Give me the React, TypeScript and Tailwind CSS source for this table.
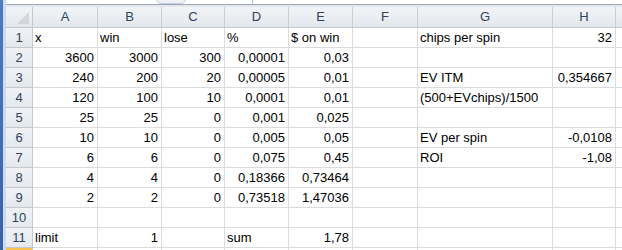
import React from "react";

const cols = [
  { k: "A", w: 65 },
  { k: "B", w: 64 },
  { k: "C", w: 63 },
  { k: "D", w: 64 },
  { k: "E", w: 64 },
  { k: "F", w: 65 },
  { k: "G", w: 135 },
  { k: "H", w: 63 },
];

type Cell = string | [string, "l" | "r"];

const data: string[][] = [
  ["x", "win", "lose", "%", "$ on win", "", "chips per spin", "32"],
  ["3600", "3000", "300", "0,00001", "0,03", "", "", ""],
  ["240", "200", "20", "0,00005", "0,01", "", "EV ITM", "0,354667"],
  ["120", "100", "10", "0,0001", "0,01", "", "(500+EVchips)/1500", ""],
  ["25", "25", "0", "0,001", "0,025", "", "", ""],
  ["10", "10", "0", "0,005", "0,05", "", "EV per spin", "-0,0108"],
  ["6", "6", "0", "0,075", "0,45", "", "ROI", "-1,08"],
  ["4", "4", "0", "0,18366", "0,73464", "", "", ""],
  ["2", "2", "0", "0,73518", "1,47036", "", "", ""],
  ["", "", "", "", "", "", "", ""],
  ["limit", "1", "", "sum", "1,78", "", "", ""],
];

const isNum = (s: string) => /^-?[0-9]+(,[0-9]+)?$/.test(s);

export default function App() {
  return (
    <div
      className="relative w-[622px] h-[250px] overflow-hidden bg-white flex"
      style={{ fontFamily: '"Liberation Sans", Arial, sans-serif' }}
    >
      {/* window frame on the left */}
      <div className="flex shrink-0">
        <div className="w-[3px] h-full bg-gradient-to-b from-[#4f7bbf] to-[#3a63a3]" />
        <div className="w-[3px] h-full bg-[#cfdaea]" />
      </div>
      <div className="flex flex-col flex-1">
        {/* formula bar remnant */}
        <div className="h-[5px] bg-white border-b border-[#9aa6b5] relative shrink-0">
          <div className="absolute left-[246px] top-0 h-full w-px bg-[#b8c0ca]" />
          <div className="absolute left-[150px] top-[-6px] w-[30px] h-[10px] rounded-full border border-[#c8ced6] bg-[#eef1f5]" />
        </div>
        <div className="h-[2px] bg-[#e4e8ee] shrink-0" />
        {/* column header */}
        <div className="flex h-[21px] shrink-0 bg-gradient-to-b from-[#f2f4f7] to-[#e3e7ec] border-b border-[#c3c9d1]">
          <div className="w-[27px] shrink-0 border-r border-[#c3c9d1] relative">
            <div
              className="absolute right-[3px] bottom-[3px] w-0 h-0"
              style={{
                borderLeft: "12px solid transparent",
                borderBottom: "12px solid #d3d7dc",
              }}
            />
          </div>
          {cols.map((c) => (
            <div
              key={c.k}
              style={{ width: c.w }}
              className="shrink-0 border-r border-[#c9ced5] flex items-center justify-center text-[13px] text-[#2e435c]"
            >
              {c.k}
            </div>
          ))}
          <div className="flex-1" />
        </div>
        {data.map((row, ri) => (
          <div key={ri} className="flex h-[20px] shrink-0">
            <div className="w-[27px] shrink-0 bg-gradient-to-b from-[#f0f2f5] to-[#e4e8ed] border-r border-b border-[#c3c9d1] flex items-center justify-center text-[13px] text-[#2e435c]">
              {ri + 1}
            </div>
            {cols.map((c, ci) => {
              const v = row[ci];
              const right = isNum(v);
              return (
                <div
                  key={c.k}
                  style={{ width: c.w }}
                  className={`shrink-0 border-r border-b border-[#dadcdd] flex items-end pb-[1px] text-[13px] leading-[16px] text-black whitespace-nowrap ${
                    right ? "justify-end pr-[3px]" : "justify-start pl-[2px]"
                  }`}
                >
                  {v}
                </div>
              );
            })}
            <div className="flex-1 border-b border-[#dadcdd]" />
          </div>
        ))}
        <div className="flex h-[2px] shrink-0">
          <div className="w-[27px] shrink-0 bg-[#f6c34b] border-r border-[#c3c9d1]" />
          {cols.map((c) => (
            <div key={c.k} style={{ width: c.w }} className="shrink-0 border-r border-[#dadcdd]" />
          ))}
        </div>
      </div>
    </div>
  );
}
